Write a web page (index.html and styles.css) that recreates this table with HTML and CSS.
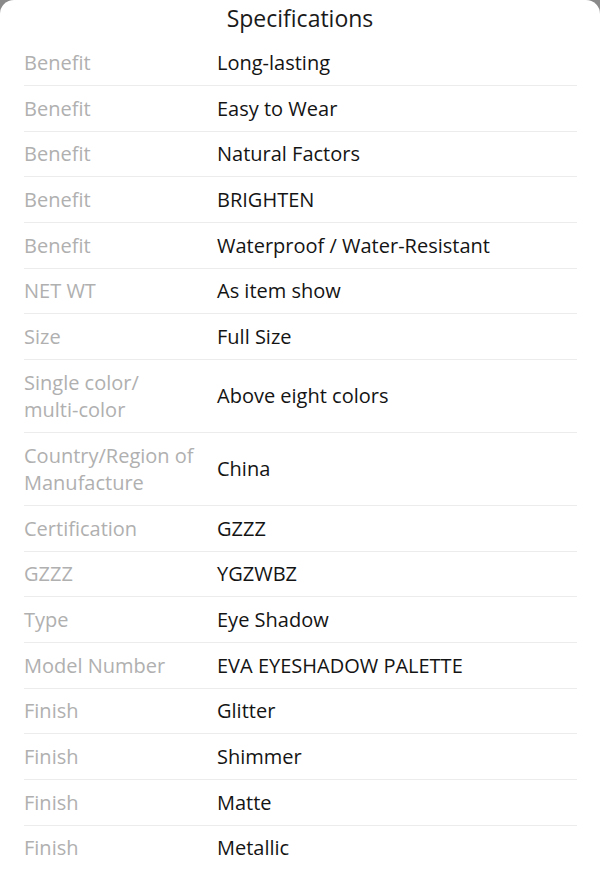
FILE: index.html
```html
<!DOCTYPE html>
<html>
<head>
<meta charset="utf-8">
<link rel="stylesheet" href="styles.css">
</head>
<body>
<div class="sheet">
  <h1 class="title">Specifications</h1>
  <div class="specs">
    <div class="row"><div class="label">Benefit</div><div class="value">Long-lasting</div></div>
    <div class="row"><div class="label">Benefit</div><div class="value">Easy to Wear</div></div>
    <div class="row"><div class="label">Benefit</div><div class="value">Natural Factors</div></div>
    <div class="row"><div class="label">Benefit</div><div class="value">BRIGHTEN</div></div>
    <div class="row"><div class="label">Benefit</div><div class="value">Waterproof / Water-Resistant</div></div>
    <div class="row"><div class="label">NET WT</div><div class="value">As item show</div></div>
    <div class="row"><div class="label">Size</div><div class="value">Full Size</div></div>
    <div class="row"><div class="label">Single color/<br>multi-color</div><div class="value">Above eight colors</div></div>
    <div class="row"><div class="label">Country/Region of Manufacture</div><div class="value">China</div></div>
    <div class="row"><div class="label">Certification</div><div class="value">GZZZ</div></div>
    <div class="row"><div class="label">GZZZ</div><div class="value">YGZWBZ</div></div>
    <div class="row"><div class="label">Type</div><div class="value">Eye Shadow</div></div>
    <div class="row"><div class="label">Model Number</div><div class="value">EVA EYESHADOW PALETTE</div></div>
    <div class="row"><div class="label">Finish</div><div class="value">Glitter</div></div>
    <div class="row"><div class="label">Finish</div><div class="value">Shimmer</div></div>
    <div class="row"><div class="label">Finish</div><div class="value">Matte</div></div>
    <div class="row"><div class="label">Finish</div><div class="value">Metallic</div></div>
  </div>
</div>
</body>
</html>
```
FILE: styles.css
```css
html, body {
  margin: 0;
  padding: 0;
  background: #8a8a8a;
}
body {
  font-family: "Open Sans", "Noto Sans", sans-serif;
  height: 869px;
  overflow: hidden;
}
.sheet {
  background: #fff;
  border-radius: 14px 14px 0 0;
  min-height: 869px;
}
.title {
  margin: 0;
  height: 40.3px;
  line-height: 37px;
  font-size: 23px;
  font-weight: 400;
  color: #1a1a1a;
  text-align: center;
}
.specs {
  margin: 0 23px 0 24px;
}
.row {
  display: grid;
  grid-template-columns: 193px 1fr;
  align-items: center;
  padding: 8.7px 0;
  border-bottom: 1px solid #ececec;
  font-size: 20px;
  line-height: 27.3px;
}
.label {
  color: #b0b0b0;
  padding-right: 4px;
}
.value {
  color: #141414;
}
```
